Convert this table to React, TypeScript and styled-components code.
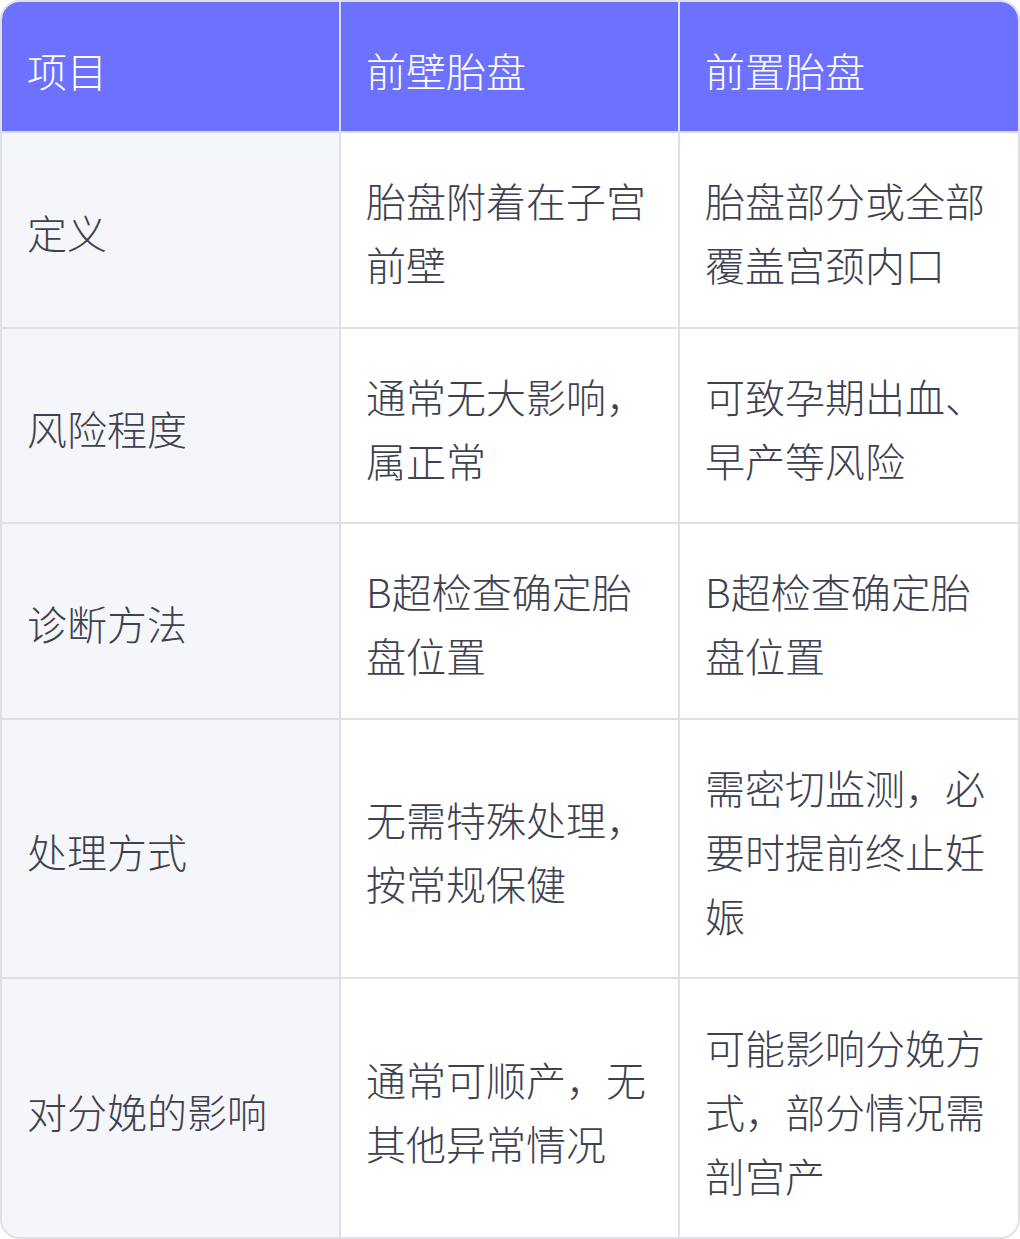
import React from "react";
import styled, { createGlobalStyle } from "styled-components";

const GlobalStyle = createGlobalStyle`
  html, body {
    margin: 0;
    padding: 0;
    background: #ffffff;
  }
`;

const TableWrap = styled.div`
  width: 1020px;
  height: 1239px;
  box-sizing: border-box;
  border: 2px solid #dfe0e6;
  border-radius: 20px;
  overflow: hidden;
  font-family: "Noto Sans CJK SC", "Noto Sans", sans-serif;
`;

const Table = styled.table`
  width: 100%;
  height: 100%;
  border-collapse: separate;
  border-spacing: 0;
  table-layout: fixed;
`;

const HeadCell = styled.th`
  background: #6c72ff;
  color: #ffffff;
  font-size: 40px;
  font-weight: 300;
  line-height: 64px;
  text-align: left;
  padding: 36px 25px 29px;
  border-bottom: 2px solid #d9dbf5;
  border-right: 2px solid #dfe0e6;

  &:last-child {
    border-right: none;
  }
`;

const Cell = styled.td<{ $label?: boolean; $last?: boolean }>`
  background: ${({ $label }) => ($label ? "#f5f6fa" : "#ffffff")};
  color: #3d4150;
  font-size: 40px;
  font-weight: 300;
  line-height: 64px;
  padding: 35px 25px 30px;
  vertical-align: middle;
  border-bottom: ${({ $last }) => ($last ? "none" : "2px solid #dfe0e6")};
  border-right: 2px solid #dfe0e6;
  word-break: break-all;

  &:last-child {
    border-right: none;
  }
`;

const headers = ["项目", "前壁胎盘", "前置胎盘"];

const rows = [
  ["定义", "胎盘附着在子宫前壁", "胎盘部分或全部覆盖宫颈内口"],
  ["风险程度", "通常无大影响，属正常", "可致孕期出血、早产等风险"],
  ["诊断方法", "B超检查确定胎盘位置", "B超检查确定胎盘位置"],
  ["处理方式", "无需特殊处理，按常规保健", "需密切监测，必要时提前终止妊娠"],
  ["对分娩的影响", "通常可顺产，无其他异常情况", "可能影响分娩方式，部分情况需剖宫产"],
];

export default function App() {
  return (
    <>
      <GlobalStyle />
      <TableWrap>
        <Table>
          <colgroup>
            <col style={{ width: 339 }} />
            <col style={{ width: 339 }} />
            <col />
          </colgroup>
          <thead>
            <tr>
              {headers.map((h) => (
                <HeadCell key={h}>{h}</HeadCell>
              ))}
            </tr>
          </thead>
          <tbody>
            {rows.map((r, i) => (
              <tr key={r[0]}>
                {r.map((c, j) => (
                  <Cell key={j} $label={j === 0} $last={i === rows.length - 1}>
                    {c}
                  </Cell>
                ))}
              </tr>
            ))}
          </tbody>
        </Table>
      </TableWrap>
    </>
  );
}
